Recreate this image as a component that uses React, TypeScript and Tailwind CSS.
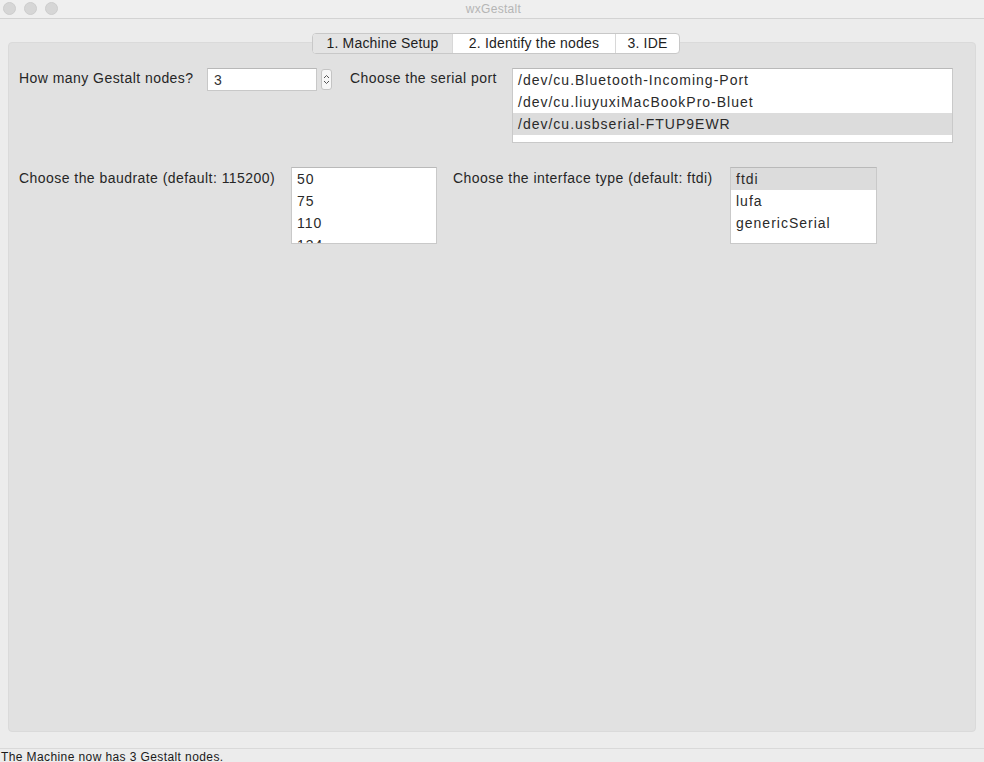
import React from "react";

const font = { fontFamily: '"Liberation Sans", Arial, sans-serif' };

function ListBox({
  items,
  selected,
  className,
}: {
  items: string[];
  selected: number;
  className: string;
}) {
  return (
    <div className={`bg-white border border-[#c9c9c9] border-t-[#b9b9b9] overflow-hidden shrink-0 ${className}`}>
      {items.map((it, i) => (
        <div
          key={i}
          className={`h-[22px] leading-[22px] pl-[5px] text-[14px] text-[#2a2a2a] whitespace-nowrap tracking-[1px] ${
            i === selected ? "bg-[#dcdcdc]" : ""
          }`}
        >
          {it}
        </div>
      ))}
    </div>
  );
}

function Spinner() {
  return (
    <div className="ml-[4px] mt-[1px] w-[11px] h-[21px] rounded-[3px] border border-[#c4c4c4] bg-[#f7f7f7] shrink-0 flex items-center justify-center">
      <svg width="7" height="13" viewBox="0 0 7 13">
        <path d="M1 5 L3.5 2.5 L6 5" fill="none" stroke="#555" strokeWidth="1" />
        <path d="M1 8 L3.5 10.5 L6 8" fill="none" stroke="#555" strokeWidth="1" />
      </svg>
    </div>
  );
}

export default function App() {
  return (
    <div className="w-[984px] h-[762px] overflow-hidden bg-[#ececec] flex flex-col" style={font}>
      {/* Title bar */}
      <div className="h-[19px] shrink-0 border-b border-[#d3d3d3] bg-[#efefef] relative flex items-center">
        <div className="flex gap-[8px] pl-[3px] -mt-[1px]">
          <div className="w-[13px] h-[13px] rounded-full bg-[#d6d6d6] border border-[#cdcdcd]" />
          <div className="w-[13px] h-[13px] rounded-full bg-[#d6d6d6] border border-[#cdcdcd]" />
          <div className="w-[13px] h-[13px] rounded-full bg-[#d6d6d6] border border-[#cdcdcd]" />
        </div>
        <div className="flex-1 text-center text-[12px] text-[#b5b5b5] -ml-[55px] tracking-[0.3px]">wxGestalt</div>
      </div>

      {/* Tabs */}
      <div className="mt-[14px] h-[21px] shrink-0 flex justify-center relative z-10">
        <div className="flex h-[21px] rounded-[4px] border border-[#c8c8c8] bg-white overflow-hidden text-[14px] text-[#1e1e1e] tracking-[0.2px] ml-[8px]">
          <div className="w-[139px] bg-[#e4e4e4] flex items-center justify-center">1. Machine Setup</div>
          <div className="w-[163px] border-l border-[#d8d8d8] flex items-center justify-center">2. Identify the nodes</div>
          <div className="w-[64px] border-l border-[#d8d8d8] flex items-center justify-center">3. IDE</div>
        </div>
      </div>

      {/* Panel */}
      <div className="-mt-[12px] mx-[8px] h-[690px] shrink-0 rounded-[4px] bg-[#e1e1e1] border border-[#dadada] pt-[25px] pl-[10px]">
        {/* Row 1 */}
        <div className="flex items-start text-[14px] text-[#262626] tracking-[0.45px]">
          <div className="w-[188px] pt-[2px] leading-[17px] shrink-0 whitespace-nowrap">How many Gestalt nodes?</div>
          <div className="w-[110px] h-[23px] bg-white border border-[#c8c8c8] border-t-[#b8b8b8] shrink-0 pl-[6px] leading-[23px] text-[14px] text-[#333]">
            3
          </div>
          <Spinner />
          <div className="ml-[18px] w-[162px] pt-[2px] leading-[17px] shrink-0 whitespace-nowrap">Choose the serial port</div>
          <ListBox
            className="w-[441px] h-[75px]"
            items={[
              "/dev/cu.Bluetooth-Incoming-Port",
              "/dev/cu.liuyuxiMacBookPro-Bluet",
              "/dev/cu.usbserial-FTUP9EWR",
            ]}
            selected={2}
          />
        </div>

        {/* Row 2 */}
        <div className="mt-[24px] flex items-start text-[14px] text-[#262626] tracking-[0.45px]">
          <div className="w-[272px] pt-[3px] leading-[17px] shrink-0 whitespace-nowrap">Choose the baudrate (default: 115200)</div>
          <ListBox className="w-[146px] h-[77px]" items={["50", "75", "110", "134"]} selected={-1} />
          <div className="ml-[16px] w-[277px] pt-[3px] leading-[17px] shrink-0 whitespace-nowrap">Choose the interface type (default: ftdi)</div>
          <ListBox className="w-[147px] h-[77px]" items={["ftdi", "lufa", "genericSerial"]} selected={0} />
        </div>
      </div>

      {/* Status bar */}
      <div className="mt-[16px] shrink-0 border-t border-[#d9d9d9] pl-[1px] pt-[1px] text-[12px] leading-[14px] text-[#1a1a1a] tracking-[0.4px]">
        The Machine now has 3 Gestalt nodes.
      </div>
    </div>
  );
}
